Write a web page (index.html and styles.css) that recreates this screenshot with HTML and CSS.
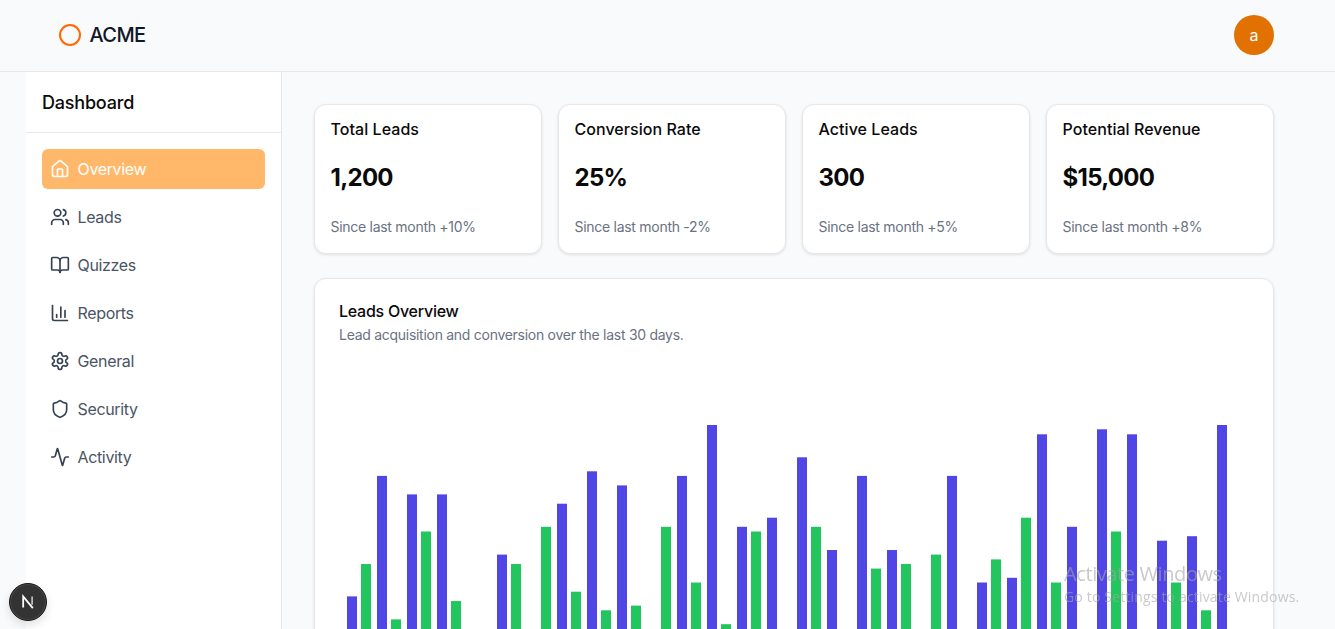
FILE: index.html
```html
<!DOCTYPE html>
<html>
<head>
    <title>ACME Dashboard</title>
    <link rel="stylesheet" href="styles.css">
</head>
<body>
    <header class="topbar">
        <div class="brand">
            <span class="brand-ring"></span>
            <span class="brand-name">ACME</span>
        </div>
        <div class="avatar">a</div>
    </header>

    <div class="layout">
        <aside class="sidebar">
            <h2 class="sidebar-title">Dashboard</h2>
            <nav class="nav">
                <a class="nav-item active">
                    <svg class="icon" viewBox="0 0 24 24"><path d="M15 21v-8a1 1 0 0 0-1-1h-4a1 1 0 0 0-1 1v8"/><path d="M3 10a2 2 0 0 1 .709-1.528l7-5.999a2 2 0 0 1 2.582 0l7 5.999A2 2 0 0 1 21 10v9a2 2 0 0 1-2 2H5a2 2 0 0 1-2-2z"/></svg>
                    Overview
                </a>
                <a class="nav-item">
                    <svg class="icon" viewBox="0 0 24 24"><path d="M16 21v-2a4 4 0 0 0-4-4H6a4 4 0 0 0-4 4v2"/><circle cx="9" cy="7" r="4"/><path d="M22 21v-2a4 4 0 0 0-3-3.87"/><path d="M16 3.13a4 4 0 0 1 0 7.75"/></svg>
                    Leads
                </a>
                <a class="nav-item">
                    <svg class="icon" viewBox="0 0 24 24"><path d="M12 7v14"/><path d="M3 18a1 1 0 0 1-1-1V4a1 1 0 0 1 1-1h5a4 4 0 0 1 4 4 4 4 0 0 1 4-4h5a1 1 0 0 1 1 1v13a1 1 0 0 1-1 1h-6a3 3 0 0 0-3 3 3 3 0 0 0-3-3z"/></svg>
                    Quizzes
                </a>
                <a class="nav-item">
                    <svg class="icon" viewBox="0 0 24 24"><path d="M3 3v16a2 2 0 0 0 2 2h16"/><path d="M18 17V9"/><path d="M13 17V5"/><path d="M8 17v-3"/></svg>
                    Reports
                </a>
                <a class="nav-item">
                    <svg class="icon" viewBox="0 0 24 24"><path d="M12.22 2h-.44a2 2 0 0 0-2 2v.18a2 2 0 0 1-1 1.73l-.43.25a2 2 0 0 1-2 0l-.15-.08a2 2 0 0 0-2.73.73l-.22.38a2 2 0 0 0 .73 2.73l.15.1a2 2 0 0 1 1 1.72v.51a2 2 0 0 1-1 1.74l-.15.09a2 2 0 0 0-.73 2.73l.22.38a2 2 0 0 0 2.73.73l.15-.08a2 2 0 0 1 2 0l.43.25a2 2 0 0 1 1 1.73V20a2 2 0 0 0 2 2h.44a2 2 0 0 0 2-2v-.18a2 2 0 0 1 1-1.73l.43-.25a2 2 0 0 1 2 0l.15.08a2 2 0 0 0 2.73-.73l.22-.39a2 2 0 0 0-.73-2.73l-.15-.08a2 2 0 0 1-1-1.74v-.5a2 2 0 0 1 1-1.74l.15-.09a2 2 0 0 0 .73-2.73l-.22-.38a2 2 0 0 0-2.73-.73l-.15.08a2 2 0 0 1-2 0l-.43-.25a2 2 0 0 1-1-1.73V4a2 2 0 0 0-2-2z"/><circle cx="12" cy="12" r="3"/></svg>
                    General
                </a>
                <a class="nav-item">
                    <svg class="icon" viewBox="0 0 24 24"><path d="M20 13c0 5-3.5 7.5-7.66 8.95a1 1 0 0 1-.67-.01C7.5 20.5 4 18 4 13V6a1 1 0 0 1 1-1c2 0 4.5-1.2 6.24-2.72a1.17 1.17 0 0 1 1.52 0C14.51 3.81 17 5 19 5a1 1 0 0 1 1 1z"/></svg>
                    Security
                </a>
                <a class="nav-item">
                    <svg class="icon" viewBox="0 0 24 24"><path d="M22 12h-2.48a2 2 0 0 0-1.93 1.46l-2.35 8.36a.25.25 0 0 1-.48 0L9.24 2.18a.25.25 0 0 0-.48 0l-2.35 8.36A2 2 0 0 1 4.49 12H2"/></svg>
                    Activity
                </a>
            </nav>
        </aside>

        <main class="content">
            <section class="stats">
                <div class="card stat">
                    <div class="stat-label">Total Leads</div>
                    <div class="stat-value">1,200</div>
                    <div class="stat-note">Since last month +10%</div>
                </div>
                <div class="card stat">
                    <div class="stat-label">Conversion Rate</div>
                    <div class="stat-value">25%</div>
                    <div class="stat-note">Since last month -2%</div>
                </div>
                <div class="card stat">
                    <div class="stat-label">Active Leads</div>
                    <div class="stat-value">300</div>
                    <div class="stat-note">Since last month +5%</div>
                </div>
                <div class="card stat">
                    <div class="stat-label">Potential Revenue</div>
                    <div class="stat-value">$15,000</div>
                    <div class="stat-note">Since last month +8%</div>
                </div>
            </section>

            <section class="card chart-card">
                <h3 class="chart-title">Leads Overview</h3>
                <p class="chart-desc">Lead acquisition and conversion over the last 30 days.</p>
                <svg class="chart" viewBox="0 0 910 340">
                    <g class="bars-blue">
                        <rect x="8" y="227.4"/><rect x="38" y="106.9"/><rect x="68" y="125.4"/><rect x="98" y="125.4"/>
                        <rect x="158" y="185.6"/><rect x="218" y="134.7"/><rect x="248" y="102.3"/><rect x="278" y="116.4"/>
                        <rect x="338" y="106.9"/><rect x="368" y="56"/><rect x="398" y="157.8"/><rect x="428" y="148.7"/>
                        <rect x="458" y="88.3"/><rect x="488" y="181"/><rect x="518" y="106.9"/><rect x="548" y="181"/>
                        <rect x="608" y="106.9"/><rect x="638" y="213.5"/><rect x="668" y="208.8"/><rect x="698" y="65.3"/>
                        <rect x="728" y="157.8"/><rect x="758" y="60.3"/><rect x="788" y="65.3"/><rect x="818" y="171.7"/>
                        <rect x="848" y="167.2"/><rect x="878" y="56"/>
                    </g>
                    <g class="bars-green">
                        <rect x="22" y="195"/><rect x="52" y="250.4"/><rect x="82" y="162.5"/><rect x="112" y="232"/>
                        <rect x="172" y="195"/><rect x="202" y="157.8"/><rect x="232" y="222.7"/><rect x="262" y="241.3"/>
                        <rect x="292" y="236.6"/><rect x="322" y="157.8"/><rect x="352" y="213.5"/><rect x="382" y="255.2"/>
                        <rect x="412" y="162.5"/><rect x="472" y="157.8"/><rect x="532" y="199.6"/><rect x="562" y="195"/>
                        <rect x="592" y="185.6"/><rect x="652" y="190.4"/><rect x="682" y="148.7"/><rect x="712" y="213.5"/>
                        <rect x="772" y="162.5"/><rect x="832" y="213.5"/><rect x="862" y="241.3"/>
                    </g>
                </svg>
            </section>
        </main>
    </div>

    <button class="dev-badge">
        <svg viewBox="0 0 16 16"><path d="M4.5 12V4L11.5 12.5"/><path class="dev-badge-fade" d="M11 4v6"/></svg>
    </button>

    <div class="watermark">
        <div class="watermark-title">Activate Windows</div>
        <div class="watermark-note">Go to Settings to activate Windows.</div>
    </div>
</body>
</html>
```

FILE: styles.css
```css
* {
    box-sizing: border-box;
}
body {
    height: 100vh;
    margin: 0;
    overflow: hidden;
    font-family: Inter, sans-serif;
    background-color: #f9fafb;
    color: #0a0a0a;
}
.topbar {
    display: flex;
    justify-content: space-between;
    align-items: center;
    height: 72px;
    padding: 0 61px 1px 59px;
    border-bottom: 1px solid #e5e7eb;
}
.brand {
    display: flex;
    align-items: center;
    gap: 8.5px;
}
.brand-ring {
    width: 22px;
    height: 22px;
    border: 2px solid #ff6900;
    border-radius: 50%;
}
.brand-name {
    font-size: 20px;
    font-weight: 500;
    letter-spacing: -0.6px;
    color: #101828;
}
.avatar {
    display: flex;
    justify-content: center;
    align-items: center;
    width: 40px;
    height: 40px;
    border-radius: 50%;
    background-color: #e17100;
    color: white;
    font-size: 16px;
}
.layout {
    display: flex;
    height: calc(100vh - 72px);
    padding-left: 26px;
}
.sidebar {
    flex: none;
    width: 256px;
    background: white;
    border-right: 1px solid #e5e7eb;
}
.sidebar-title {
    height: 61px;
    margin: 0;
    padding: 0 16px;
    font-size: 18px;
    font-weight: 500;
    letter-spacing: -0.2px;
    line-height: 61px;
    border-bottom: 1px solid #e5e7eb;
}
.nav {
    display: flex;
    flex-direction: column;
    gap: 8px;
    padding: 16px;
}
.nav-item {
    display: flex;
    align-items: center;
    gap: 7.5px;
    height: 40px;
    padding: 0 8px;
    border-radius: 6px;
    color: #4a5565;
    font-size: 16px;
    letter-spacing: -0.35px;
}
.nav-item.active {
    background-color: #ffb86a;
    color: white;
}
.icon {
    flex: none;
    width: 20px;
    height: 20px;
    fill: none;
    stroke: #364153;
    stroke-width: 2;
    stroke-linecap: round;
    stroke-linejoin: round;
}
.active .icon {
    stroke: white;
}
.content {
    flex: 1;
    padding: 32px 61px 0 32px;
}
.stats {
    display: grid;
    grid-template-columns: repeat(4, 1fr);
    gap: 16px;
    margin-bottom: 24px;
}
.card {
    background: white;
    border: 1px solid #e5e7eb;
    border-radius: 12px;
    box-shadow: 0 1px 3px rgba(0, 0, 0, 0.1);
}
.stat {
    padding: 16px 16px 16px 15.5px;
}
.stat-label {
    font-size: 16px;
    font-weight: 500;
    letter-spacing: 0.05px;
    line-height: 16px;
}
.stat-value {
    margin-top: 25px;
    font-size: 24px;
    font-weight: 700;
    letter-spacing: -0.7px;
    line-height: 32px;
}
.stat-note {
    margin-top: 23px;
    font-size: 14px;
    letter-spacing: -0.28px;
    line-height: 20px;
    color: #6a7282;
}
.chart-card {
    height: 440px;
    padding: 24px;
}
.chart-title {
    margin: 0;
    font-size: 16px;
    font-weight: 500;
    letter-spacing: -0.25px;
    line-height: 16px;
}
.chart-desc {
    margin: 6px 0 0;
    font-size: 14px;
    letter-spacing: -0.28px;
    line-height: 20px;
    color: #6a7282;
}
.chart {
    display: block;
    width: 910px;
    height: 340px;
    margin-top: 24px;
}
.chart rect {
    width: 10px;
    height: 340px;
}
.bars-blue {
    fill: #4f46e5;
}
.bars-green {
    fill: #22c55e;
}
.dev-badge {
    position: fixed;
    left: 9px;
    bottom: 8px;
    display: flex;
    justify-content: center;
    align-items: center;
    width: 38px;
    height: 38px;
    padding: 0;
    border: 1px solid #161616;
    border-radius: 50%;
    background-color: #333;
    box-shadow: inset 0 0 0 1px #4a4a4a, 0 4px 10px rgba(0, 0, 0, 0.12);
}
.dev-badge svg {
    width: 22px;
    height: 22px;
    fill: none;
    stroke: white;
    stroke-width: 1.3;
}
.dev-badge-fade {
    stroke: #bbb;
}
.watermark {
    position: fixed;
    left: 1064px;
    top: 560px;
    font-family: "Open Sans", sans-serif;
    color: rgba(165, 165, 165, 0.6);
    white-space: nowrap;
    pointer-events: none;
}
.watermark-title {
    font-size: 20px;
    letter-spacing: -0.4px;
    line-height: 27px;
}
.watermark-note {
    font-size: 14px;
    letter-spacing: 0.17px;
    line-height: 19px;
}
```
